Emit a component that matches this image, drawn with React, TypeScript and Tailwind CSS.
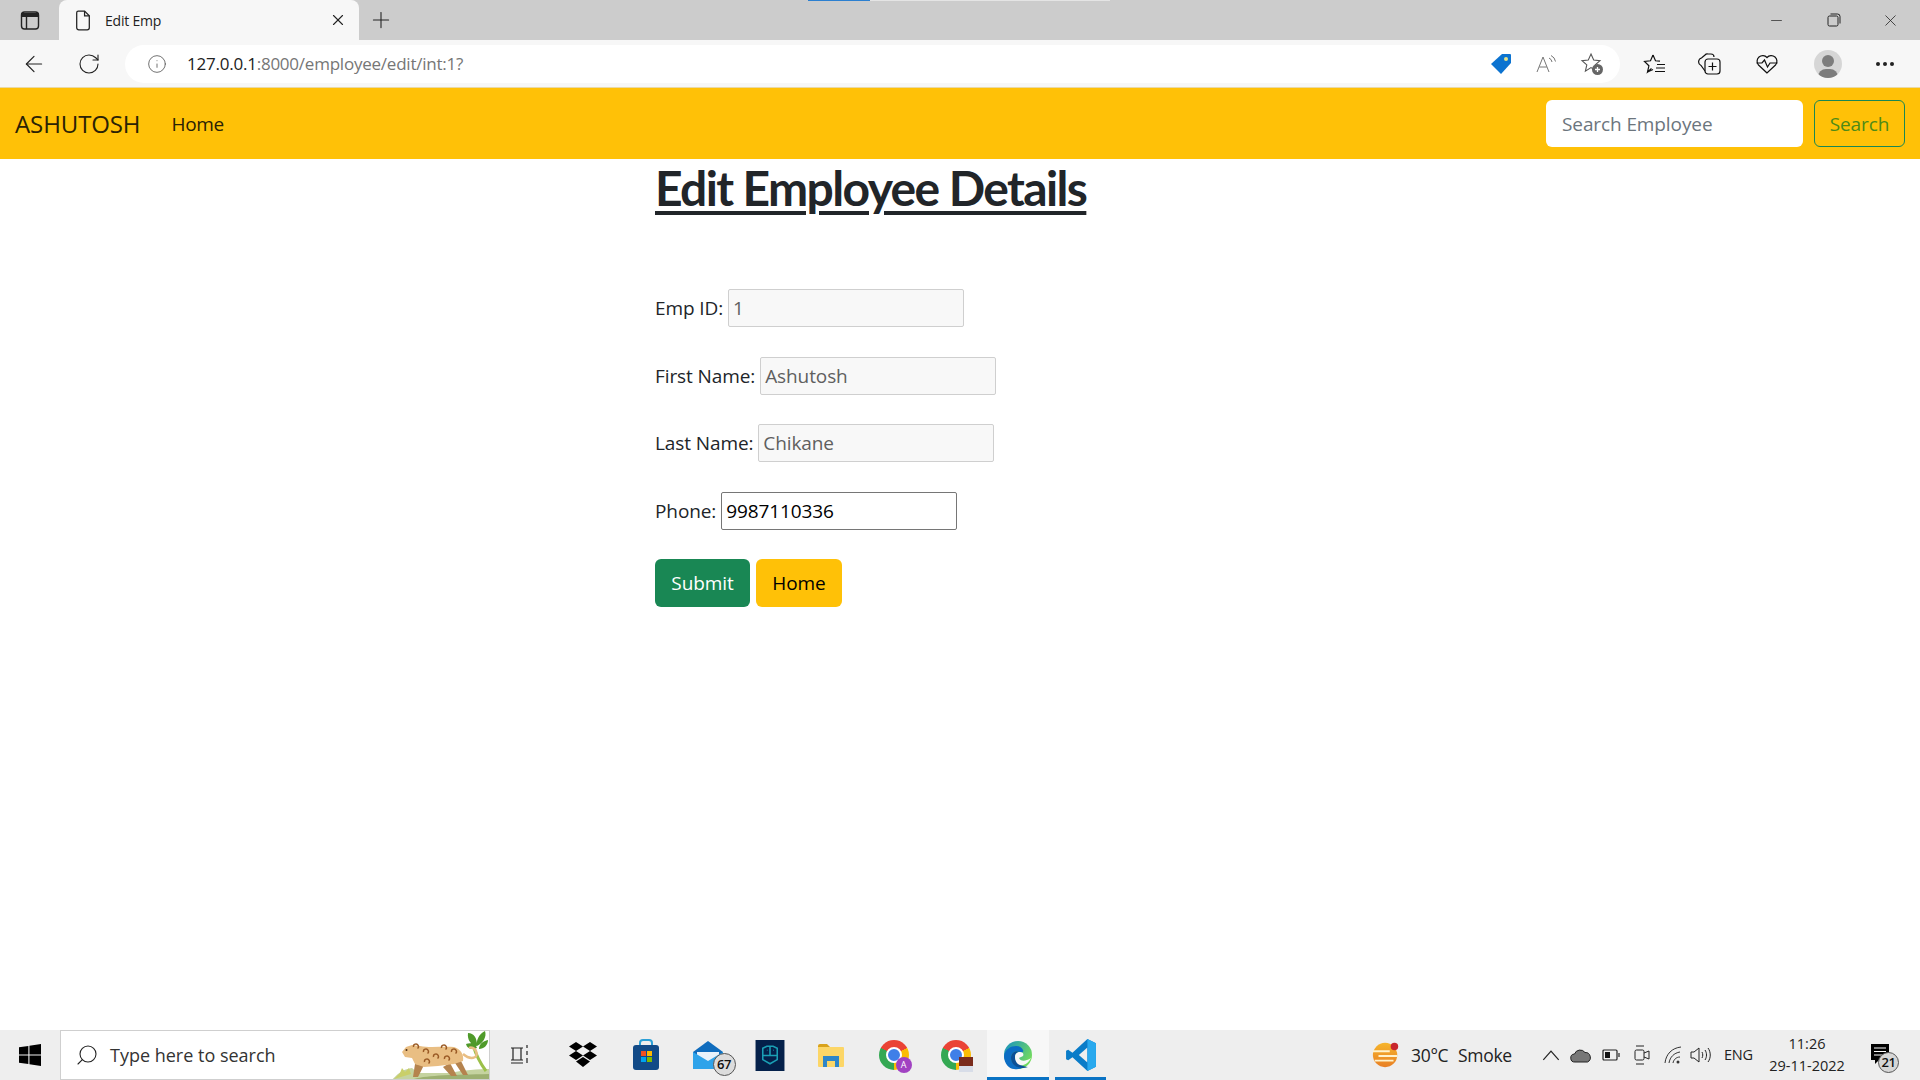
import { ArrowLeft, RotateCw, Info, Plus, X, Minus, Search } from 'lucide-react';

const sans = 'font-["Open_Sans","Liberation_Sans",sans-serif]';

function FormRow({ label, value, disabled }: { label: string; value: string; disabled?: boolean }) {
  return (
    <div className="flex items-center h-[38px] mb-[29.5px]">
      <label className="pt-[1px] text-[19px] text-[#212529] mr-[5px] tracking-[-0.1px] leading-none">{label}</label>
      <div
        className={`w-[236px] h-[38px] pl-[4px] pt-[1px] flex items-center rounded-[2px] border text-[19px] tracking-[-0.1px] ${
          disabled ? 'bg-[#f8f8f8] border-[#cfcfcf] text-[#5f5f5f]' : 'bg-white border-[#767676] text-black'
        }`}
      >
        {value}
      </div>
    </div>
  );
}

function ChromeBall({ children }: { children: React.ReactNode }) {
  return (
    <div className="relative w-[30px] h-[30px] rounded-full bg-[conic-gradient(#ea4335_0_17%,#fbbc05_17%_50%,#34a853_50%_83%,#ea4335_83%_100%)] flex items-center justify-center">
      <div className="w-[16px] h-[16px] rounded-full bg-[#3f7fe8] border-2 border-white" />
      {children}
    </div>
  );
}

function BrowserChrome() {
  return (
    <div className={`shrink-0 ${sans}`}>
      <div className="relative h-10 bg-[#cccccc] flex items-end">
        <div className="absolute top-0 left-[808px] w-[62px] h-px bg-[#2b7fd0]" />
        <div className="absolute top-0 left-[870px] w-[240px] h-px bg-[#e4e4e4]" />
        <div className="w-[59px] h-10 flex items-center justify-center">
          <svg width="20" height="19" viewBox="0 0 20 19" fill="none" stroke="#222" strokeWidth="1.4">
            <rect x="1.500" y="1" width="17" height="17" rx="3" />
            <path d="M1.500 4h17" strokeWidth="4" />
            <path d="M6.500 4v14" />
          </svg>
        </div>
        <div className="w-[300px] shrink-0 h-10 bg-[#f7f7f7] rounded-t-lg flex items-center pl-[16px] pr-[12px]">
          <svg width="16" height="21" viewBox="0 0 14 20" fill="none" stroke="#222" strokeWidth="1.2">
            <path d="M2.500 1h6l4.500 4.500V17a2 2 0 0 1-2 2H3a2 2 0 0 1-2-2V2.500A1.500 1.500 0 0 1 2.500 1Z" />
            <path d="M8.500 1v4.500H13" />
          </svg>
          <span className="ml-[14px] text-[14px] tracking-[-0.2px] text-[#222] flex-1">Edit Emp</span>
          <X size={18} strokeWidth={1.500} color="#222" />
        </div>
        <div className="w-[44px] h-10 flex items-center justify-center">
          <Plus size={26} strokeWidth={1} color="#222" />
        </div>
        <div className="ml-auto flex h-10 items-center text-[#222]">
          <div className="w-[57px] flex justify-center"><Minus size={17} strokeWidth={1} /></div>
          <div className="w-[57px] flex justify-center">
            <svg width="14" height="14" viewBox="0 0 14 14" fill="none" stroke="#222" strokeWidth="1">
              <rect x="1" y="3" width="10" height="10" rx="1.500" />
              <path d="M3.500 1h7A2.500 2.500 0 0 1 13 3.500v7" />
            </svg>
          </div>
          <div className="w-[58px] flex justify-center pr-[2px]"><X size={19} strokeWidth={1} /></div>
        </div>
      </div>

      <div className="h-12 bg-[#f7f7f7] flex items-center border-b border-[#e9d9a6]">
        <div className="w-[125px] shrink-0 flex items-center">
          <div className="w-[68px] flex justify-center"><ArrowLeft size={26} strokeWidth={1.100} color="#222" /></div>
          <div className="w-[42px] flex justify-center"><RotateCw size={24} strokeWidth={1.100} color="#222" /></div>
        </div>
        <div className="w-[1495px] shrink-0 h-[38px] bg-white rounded-[19px] flex items-center pl-[22px] pr-[16px]">
          <Info size={20} strokeWidth={1} color="#555" />
          <div className="ml-[20px] text-[17px] tracking-[-0.23px] flex-1 leading-none">
            <span className="text-[#222]">127.0.0.1</span>
            <span className="text-[#767676]">:8000/employee/edit/int:1?</span>
          </div>
          <svg width="22" height="22" viewBox="0 0 22 22" className="mr-[24px]">
            <path d="M12 1h8a1 1 0 0 1 1 1v8L11 21 1 11Z" fill="#0c73d0" />
            <circle cx="16" cy="6" r="2" fill="#e7e48a" />
          </svg>
          <svg width="22" height="20" viewBox="0 0 22 20" fill="none" stroke="#767676" strokeWidth="1" className="mr-[22px]">
            <path d="M1 18 7 3l6 15M3.300 13h7.500" />
            <path d="M13 4a5 5 0 0 1 3 4M15 1.500a8 8 0 0 1 4.500 6" />
          </svg>
          <svg width="24" height="24" viewBox="0 0 24 24" fill="none" stroke="#555" strokeWidth="1.100">
            <path d="M11 2l2.700 6 6.300.6-4.800 4.300 1.400 6.200L11 15.600l-5.600 3.500 1.400-6.200L2 8.600 8.300 8Z" />
            <circle cx="17.500" cy="17.500" r="5.500" fill="#666" stroke="none" />
            <path d="M17.500 15v5M15 17.500h5" stroke="#fff" strokeWidth="1.300" />
          </svg>
        </div>
        <div className="flex-1 flex items-center pl-[23px]">
          <svg width="24" height="24" viewBox="0 0 24 24" fill="none" stroke="#111" strokeWidth="1.200" className="mr-[31px]">
            <path d="M10 3l2.500 5.800 4.500.4M8.500 16.500 4.500 20l1.400-6.200L1.500 9.400l6-.6L10 3M14 12.500h8M13 16h9M12 19.500h10" />
            <path d="M10 17.500l-5.500 2.500" />
          </svg>
          <svg width="24" height="24" viewBox="0 0 24 24" fill="none" stroke="#111" strokeWidth="1.200" className="mr-[33px]">
            <path d="M7 19 3 13.500A4 4 0 0 1 3.500 6L7 3a3 3 0 0 1 3-1h3a3 3 0 0 1 3 3" />
            <rect x="7" y="7" width="15" height="15" rx="3" />
            <path d="M14.500 10.500v8M10.500 14.500h8" />
          </svg>
          <svg width="24" height="24" viewBox="0 0 24 24" fill="none" stroke="#111" strokeWidth="1.200" className="mr-[35px]">
            <path d="M12 21 3.500 13A5.500 5.500 0 0 1 12 5.500 5.500 5.500 0 0 1 20.500 13Z" />
            <path d="M1.500 11H7l2.500-3 3 7 2.500-4h7.500" fill="#f7f7f7" />
          </svg>
          <div className="relative w-7 h-7 rounded-full bg-[#d6d6d6] overflow-hidden mr-[34px]">
            <div className="absolute left-[8px] top-[5px] w-3 h-3 rounded-full bg-[#7d7d7d]" />
            <div className="absolute left-[4px] top-[19px] w-5 h-4 rounded-full bg-[#7d7d7d]" />
          </div>
          <span className="flex gap-[3px]">
            <i className="w-[4px] h-[4px] rounded-full bg-[#222]" />
            <i className="w-[4px] h-[4px] rounded-full bg-[#222]" />
            <i className="w-[4px] h-[4px] rounded-full bg-[#222]" />
          </span>
        </div>
      </div>
    </div>
  );
}

function Navbar() {
  return (
    <nav className={`shrink-0 h-[71px] bg-[#ffc107] flex items-center pl-[15px] pr-[15px] ${sans}`}>
      <span className="pt-[1px] text-[24px] tracking-[-0.1px] text-[#2a2205] mr-[31px]">ASHUTOSH</span>
      <span className="pt-[2px] text-[19px] tracking-[-0.35px] text-[#2a2205]">Home</span>
      <div className="ml-auto flex items-center gap-[11px]">
        <div className="w-[257px] h-[47px] bg-white rounded-[6px] flex items-center px-4 pt-[2px] text-[19px] tracking-[-0.1px] text-[#6c757d]">
          Search Employee
        </div>
        <button className="w-[91px] h-[47px] rounded-[6px] border border-[#198754] pt-[2px] text-[19px] tracking-[-0.1px] text-[#4d8a17]">
          Search
        </button>
      </div>
    </nav>
  );
}

function Cell({ w, active, line, children }: { w: string; active?: boolean; line?: boolean; children: React.ReactNode }) {
  return (
    <div className={`relative h-full shrink-0 flex items-center justify-center ${w} ${active ? 'bg-[#f7f7f7]' : ''}`}>
      {children}
      {line && <div className="absolute bottom-0 inset-x-0 h-[3px] bg-[#0a73c4]" />}
    </div>
  );
}

const spots = [
  [28, 15],
  [38, 20],
  [48, 25],
  [56, 16],
  [66, 20],
  [59, 27],
  [39, 30],
];

function Taskbar() {
  return (
    <div className={`shrink-0 h-[50px] bg-[#eeeeee] flex items-center ${sans}`}>
      <div className="w-[60px] h-full shrink-0 flex items-center justify-center">
        <svg width="22" height="22" viewBox="0 0 20 20" fill="#000">
          <path d="M0 3l8.500-1.200V9.500H0ZM9.500 1.700 20 0v9.500H9.500ZM0 10.500h8.500v7.700L0 17ZM9.500 10.500H20V20L9.500 18.300Z" />
        </svg>
      </div>
      <div className="relative w-[430px] shrink-0 h-full bg-white border border-[#cfcfcf] flex items-center pl-[14px] overflow-hidden">
        <Search size={24} strokeWidth={1.100} color="#222" className="-scale-x-100" />
        <span className="ml-[11px] text-[18px] text-[#333]">Type here to search</span>
        <svg width="101" height="50" viewBox="0 0 101 50" className="absolute right-0 top-0">
          <path d="M3 50 C10 42 16 38 24 37 L30 42 L62 42 C76 39 90 38 101 38 V50Z" fill="#c5d3a0" />
          <path d="M20 50 C34 44 60 44 101 43 V50Z" fill="#9db071" />
          <path d="M6 48l6-6 2-5 3 4 4-4 2 6Z" fill="#c9cf6a" />
          <path d="M85 14 C88 24 92 32 98 40" fill="none" stroke="#9cc04a" strokeWidth="3" />
          <path d="M80 2c6 0 9 5 9 13-6-1-10-6-9-13ZM97 0c2 6-2 12-8 15-1-6 2-12 8-15ZM78 13c5-2 10 0 11 4-5 2-10 1-11-4ZM100 9c0 5-4 9-9 9 0-5 4-8 9-9Z" fill="#4f9a2a" />
          <path d="M36 34l-6 12h-5l2-13ZM62 32l7 13h-6l-8-9ZM72 28l8 16h-5l-8-12Z" fill="#b5834e" />
          <path d="M14 21 L18 16 L24 14 L32 15 C42 17 55 15 66 16 C73 18 76 24 75 30 L66 33 L50 35 L36 36 L27 33 L24 27 L17 26 Z" fill="#e9be83" />
          <circle cx="18.500" cy="19" r="1" fill="#4a2a10" />
          <path d="M75 23 C82 29 91 28 88 20 C87 17 83 16 81 17" fill="none" stroke="#e9be83" strokeWidth="2.500" />
          <g fill="none" stroke="#9a5a25" strokeWidth="1.400">
            {spots.map(([x, y]) => (
              <path key={`${x}-${y}`} d={`M${x - 2.5} ${y + 1}a2.500 2.500 0 1 1 4 1.500`} />
            ))}
          </g>
        </svg>
      </div>
      <div className="h-full flex items-center">
        <Cell w="w-[60px]">
          <svg width="18" height="20" viewBox="0 0 18 20" fill="none" stroke="#222" strokeWidth="1.200">
            <path d="M0 3h12M2 3v12M10 3v12M0 15h12M0 18h12M16 0v3M16 6v4M16 13v5" />
          </svg>
        </Cell>
        <Cell w="w-[66px]">
          <svg width="30" height="26" viewBox="0 0 30 26" fill="#000">
            <path d="M8 0l7 4.500L8 9 1 4.500ZM22 0l7 4.500L22 9l-7-4.500ZM8 9l7 4.500L8 18l-7-4.500ZM22 9l7 4.500L22 18l-7-4.500ZM15 15l7 4.500L15 25l-7-5.500Z" />
          </svg>
        </Cell>
        <Cell w="w-[59px]">
          <svg width="28" height="32" viewBox="0 0 28 32">
            <path d="M8 8V4a3 3 0 0 1 3-3h6a3 3 0 0 1 3 3v4" fill="none" stroke="#2a9fd6" strokeWidth="2" />
            <rect x="1" y="6" width="26" height="25" rx="3" fill="#114a87" />
            <rect x="9" y="12" width="5" height="5" fill="#f25022" />
            <rect x="15" y="12" width="5" height="5" fill="#ffb900" />
            <rect x="9" y="18" width="5" height="5" fill="#00a4ef" />
            <rect x="15" y="18" width="5" height="5" fill="#7fba00" />
          </svg>
        </Cell>
        <Cell w="w-[65px]">
          <div className="relative">
            <svg width="30" height="28" viewBox="0 0 30 28">
              <path d="M0 11 15 0l15 11v17H0Z" fill="#0f6cbd" />
              <path d="M4 11h22v6l-11 6-11-6Z" fill="#e8f2fb" />
              <path d="M0 11l15 9 15-9v17H0Z" fill="#2ea3ea" />
            </svg>
            <span className="absolute -right-[13px] -bottom-[7px] w-[23px] h-[23px] rounded-full bg-[#dcdcdc] border border-[#555] flex items-center justify-center text-[13px] font-semibold tracking-[-0.5px] text-[#111]">
              67
            </span>
          </div>
        </Cell>
        <Cell w="w-[60px]">
          <svg width="30" height="31" viewBox="0 0 28 30" fill="none">
            <rect width="28" height="30" fill="#04204a" />
            <path d="M7 8l4-2h6l4 2v11l-7 4-7-4Z" stroke="#1a9fb5" strokeWidth="1.500" />
            <path d="M14 6v9M7 15h14M11 10h.5M17 10h.5" stroke="#1a9fb5" strokeWidth="1.500" />
          </svg>
        </Cell>
        <Cell w="w-[62px]">
          <svg width="28" height="26" viewBox="0 0 28 26">
            <path d="M1 4a2 2 0 0 1 2-2h7l3 3H1Z" fill="#d9a21b" />
            <path d="M1 5h25a1 1 0 0 1 1 1v18a1 1 0 0 1-1 1H2a1 1 0 0 1-1-1Z" fill="#fcd667" />
            <path d="M6 14h16v11h-4v-6h-8v6H6Z" fill="#2e86c9" />
          </svg>
        </Cell>
        <Cell w="w-[63px]">
          <ChromeBall>
            <span className="absolute -right-[3px] -bottom-[3px] w-[16px] h-[16px] rounded-full bg-[#a142c2] text-white text-[9px] flex items-center justify-center">A</span>
          </ChromeBall>
        </Cell>
        <Cell w="w-[62px]">
          <ChromeBall>
            <span className="absolute -right-[2px] -bottom-[2px] w-[14px] h-[15px] bg-[linear-gradient(#7a2b1c_0_60%,#d8dde8_60%_100%)]" />
          </ChromeBall>
        </Cell>
        <Cell w="w-[62px]" active line>
          <svg width="30" height="30" viewBox="0 0 30 30">
            <defs>
              <linearGradient id="edgeTop" x1="0" y1="0" x2="1" y2="0.600">
                <stop offset="0" stopColor="#1590c4" />
                <stop offset="1" stopColor="#74dc5c" />
              </linearGradient>
            </defs>
            <circle cx="15" cy="15" r="14" fill="url(#edgeTop)" />
            <path d="M1 16C2 9 8 6 13 6c4 0 6 2 7 4 1 2-1 3-3 2-4-2-9 0-9 6 0 5 5 10 13 9a14 14 0 0 1-10 2C6 29 1 23 1 16Z" fill="#0b6dc4" />
            <path d="M8 18c0-6 5-8 9-6-3 0-5 2-5 5 0 5 5 9 13 10-8 3-17-1-17-9Z" fill="#0a4f96" />
            <path d="M12 17c0-3 2-5 5-5s4 2 3 4c-1 1-3 1-4 2 1 3 6 4 12 0-3 6-8 8-11 7-3-1-5-4-5-8Z" fill="#f7f7f7" />
          </svg>
        </Cell>
        <Cell w="w-[6px]"><span /></Cell>
        <Cell w="w-[51px]" line>
          <svg width="30" height="32" viewBox="0 0 28 30">
            <path d="M20 0l8 4v22l-8 4-14-13-4 3-2-1v-8l2-1 4 3Z" fill="#0a7cc8" />
            <path d="M20 8l-8 7 8 7Z" fill="#eeeeee" />
            <path d="M20 0l8 4v22l-8 4Z" fill="#29a9ee" />
          </svg>
        </Cell>
      </div>

      <div className="ml-auto h-full flex items-center">
        <Cell w="w-[32px]">
          <svg width="30" height="30" viewBox="0 0 32 30">
            <defs>
              <linearGradient id="sunFill" x1="0" y1="0" x2="0" y2="1">
                <stop offset="0" stopColor="#f6b52c" />
                <stop offset="1" stopColor="#e87f24" />
              </linearGradient>
            </defs>
            <circle cx="15" cy="15" r="13" fill="url(#sunFill)" />
            <path d="M2 11h18M8 16h20M4 21h20" stroke="#fff2cc" strokeWidth="2" />
            <circle cx="25" cy="6" r="4" fill="#c8262c" />
          </svg>
        </Cell>
        <span className="ml-[9px] text-[17.500px] tracking-[-0.3px] text-[#222] w-[47px]">30°C</span>
        <span className="text-[17.500px] tracking-[-0.3px] text-[#222] w-[60px]">Smoke</span>
        <div className="w-[18px]" />
        <Cell w="w-[30px]">
          <svg width="18" height="11" viewBox="0 0 16 10" fill="none" stroke="#222" strokeWidth="1.100">
            <path d="M1 9 8 1l7 8" />
          </svg>
        </Cell>
        <Cell w="w-[30px]">
          <svg width="22" height="16" viewBox="0 0 22 16" fill="#777" stroke="#222" strokeWidth="1">
            <path d="M5 15a4 4 0 0 1-.5-8A6 6 0 0 1 15 5.500 5 5 0 0 1 17.500 15Z" />
          </svg>
        </Cell>
        <Cell w="w-[30px]">
          <svg width="20" height="12" viewBox="0 0 18 12" fill="none" stroke="#222" strokeWidth="1.200">
            <rect x="1" y="1" width="14" height="10" rx="1" />
            <rect x="3" y="3" width="5" height="6" fill="#111" stroke="none" />
            <path d="M17 4v4" />
          </svg>
        </Cell>
        <Cell w="w-[32px]">
          <svg width="18" height="24" viewBox="0 0 18 24" fill="none" stroke="#222" strokeWidth="1">
            <rect x="2" y="7" width="9" height="10" rx="1.500" />
            <path d="M11 10l5-2v8l-5-2M3 3h8M3 21h8" />
          </svg>
        </Cell>
        <Cell w="w-[30px]">
          <svg width="20" height="20" viewBox="0 0 20 20" fill="none" stroke="#333" strokeWidth="1">
            <path d="M2 18C3 9 9 3 18 2M6 18c1-6 5-10 11-11M10 18c.5-3 3-6 7-6" />
            <circle cx="15" cy="17" r="1.500" fill="#333" stroke="none" />
          </svg>
        </Cell>
        <Cell w="w-[26px]">
          <svg width="22" height="18" viewBox="0 0 22 18" fill="none" stroke="#222" strokeWidth="1">
            <path d="M1 6h3l5-4v14l-5-4H1ZM12 6c1 2 1 4 0 6M15 4c2 3 2 7 0 10M18 2c3 4 3 10 0 14" />
          </svg>
        </Cell>
        <span className="ml-[10px] text-[14.500px] tracking-[-0.2px] text-[#222] w-[43px] whitespace-nowrap">ENG</span>
        <div className="w-[80px] flex flex-col items-center text-[14.500px] tracking-[0px] text-[#222] leading-[22px] whitespace-nowrap">
          <span>11:26</span>
          <span>29-11-2022</span>
        </div>
        <div className="relative w-[73px] pl-[24px]">
          <svg width="18" height="22" viewBox="0 0 18 22">
            <path d="M0 0h18v16H8l-4 4v-4H0Z" fill="#000" />
            <path d="M3 4h12M3 7.500h12M3 11h12" stroke="#fff" strokeWidth="1" />
          </svg>
          <span className="absolute left-[31px] top-[8px] w-[21px] h-[21px] rounded-full bg-[#d6d6d6] border border-[#555] flex items-center justify-center text-[13px] font-semibold tracking-[-0.5px] text-[#111]">
            21
          </span>
        </div>
      </div>
    </div>
  );
}

export default function App() {
  return (
    <div className={`h-screen w-full flex flex-col bg-white overflow-hidden ${sans}`}>
      <BrowserChrome />
      <Navbar />
      <main className="flex-1 pl-[655px]">
        <h1 className='pt-[1px] font-["Lato",sans-serif] font-bold text-[48px] leading-[55px] tracking-[-1.62px] underline decoration-[4px] underline-offset-[5px] text-[#212529]'>
          Edit Employee Details
        </h1>
        <div className="pt-[74px]">
          <FormRow label="Emp ID:" value="1" disabled />
          <FormRow label="First Name:" value="Ashutosh" disabled />
          <FormRow label="Last Name:" value="Chikane" disabled />
          <FormRow label="Phone:" value="9987110336" />
          <div className="flex gap-[6px]">
            <button className="w-[95px] h-[48px] rounded-[6px] bg-[#198754] pt-[1px] text-white text-[19px] tracking-[-0.1px]">Submit</button>
            <button className="w-[86px] h-[48px] rounded-[6px] bg-[#ffc107] pt-[1px] text-black text-[19px] tracking-[-0.1px]">Home</button>
          </div>
        </div>
      </main>
      <Taskbar />
    </div>
  );
}
